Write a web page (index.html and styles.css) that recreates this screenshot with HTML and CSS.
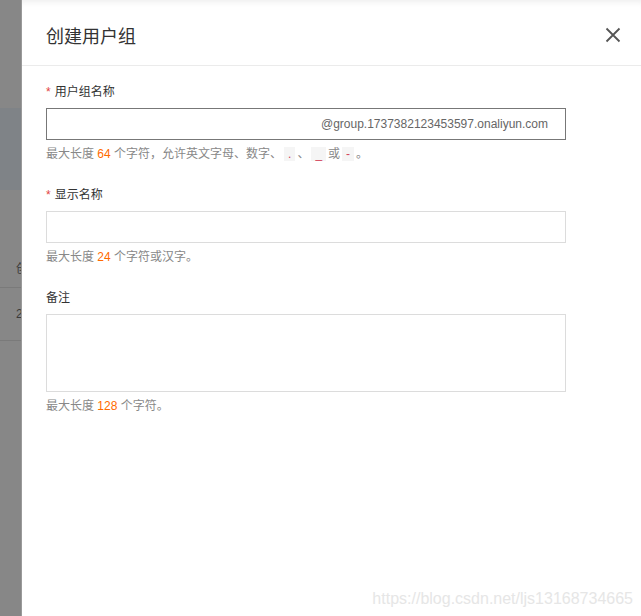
FILE: index.html
```html
<!DOCTYPE html>
<html lang="zh-CN">
<head>
<meta charset="utf-8">
<title>创建用户组</title>
<link rel="stylesheet" href="styles.css">
</head>
<body>
<div class="screen">
  <div class="backdrop" aria-hidden="true">
    <div class="bd-top"></div>
    <div class="bd-band"></div>
    <div class="bd-gap"></div>
    <div class="bd-row bd-row1"><span class="bd-text">创建</span></div>
    <div class="bd-row bd-row2"><span class="bd-text">2021</span></div>
  </div>
  <div class="drawer">
    <div class="drawer-header">
      <h1 class="drawer-title">创建用户组</h1>
      <button class="close-btn" aria-label="关闭">
        <svg width="16" height="16" viewBox="0 0 16 16"><path d="M1.5 1.5 L14.5 14.5 M14.5 1.5 L1.5 14.5" stroke="#555" stroke-width="1.8" fill="none"/></svg>
      </button>
    </div>
    <div class="drawer-body">
      <div class="field">
        <label class="field-label"><span class="req">*</span>用户组名称</label>
        <div class="input input-active"><span class="suffix">@group.1737382123453597.onaliyun.com</span></div>
        <div class="help">最大长度 <span class="num">64</span> 个字符，允许英文字母、数字、<code class="chip">.</code>、<code class="chip">_</code>或<code class="chip">-</code>。</div>
      </div>
      <div class="field">
        <label class="field-label"><span class="req">*</span>显示名称</label>
        <div class="input"></div>
        <div class="help">最大长度 <span class="num">24</span> 个字符或汉字。</div>
      </div>
      <div class="field">
        <label class="field-label">备注</label>
        <div class="input textarea"></div>
        <div class="help">最大长度 <span class="num">128</span> 个字符。</div>
      </div>
    </div>
    <div class="watermark">https://blog.csdn.net/ljs13168734665</div>
  </div>
</div>
</body>
</html>
```
FILE: styles.css
```css
* { box-sizing: border-box; }
html, body { margin: 0; padding: 0; }
body {
  font-family: "Liberation Sans", "Noto Sans CJK SC", sans-serif;
  background: #fff;
}
.screen {
  display: flex;
  width: 641px;
  height: 616px;
  overflow: hidden;
}
.backdrop {
  width: 22px;
  flex: none;
  background: #878787;
  border-right: 1px solid #9a9a9a;
  overflow: hidden;
  display: flex;
  flex-direction: column;
}
.bd-top { height: 108px; }
.bd-band { height: 82px; background: #7f8387; }
.bd-gap { height: 58px; }
.bd-row {
  border-bottom: 1px solid #7a7a7a;
  display: flex;
  align-items: center;
  padding-left: 16px;
  white-space: nowrap;
}
.bd-row1 { height: 40px; }
.bd-row2 { height: 53px; }
.bd-text { font-size: 12px; color: #3a3a3a; }
.drawer {
  flex: 1;
  position: relative;
  background: #fff;
  box-shadow: inset 0 7px 6px -5px rgba(0,0,0,0.07);
}
.drawer-header {
  height: 66px;
  border-bottom: 1px solid #ebebeb;
  display: flex;
  align-items: center;
  justify-content: space-between;
  padding: 4px 20px 0 24px;
}
.drawer-title {
  margin: 0;
  font-size: 18px;
  font-weight: normal;
  color: #333;
}
.close-btn {
  border: 0;
  background: none;
  padding: 0;
  width: 16px;
  height: 16px;
  display: flex;
}
.drawer-body {
  padding: 17px 24px 0 24px;
  display: flex;
  flex-direction: column;
  gap: 23px;
}
.field-label {
  display: block;
  font-size: 12px;
  line-height: 18px;
  color: #333;
  margin-bottom: 7px;
}
.req { color: #e2443e; margin-right: 4px; }
.input {
  width: 520px;
  height: 32px;
  border: 1px solid #dcdcdc;
  display: flex;
  align-items: center;
  justify-content: flex-end;
  padding-right: 17px;
}
.input-active { border-color: #777; }
.textarea { height: 78px; }
.suffix { font-size: 12px; color: #666; }
.help {
  margin-top: 5px;
  font-size: 12px;
  line-height: 18px;
  color: #888;
}
.num { color: #ff6a00; }
.chip {
  font-family: "Liberation Sans", sans-serif;
  font-size: 12px;
  background: #f5f5f5;
  color: #d3455b;
  padding: 0 4px;
  margin: 0 2px;
}
.watermark {
  position: absolute;
  right: 8px;
  bottom: 8px;
  font-size: 16px;
  color: #e6e6e6;
  font-family: "Liberation Sans", sans-serif;
}
```
